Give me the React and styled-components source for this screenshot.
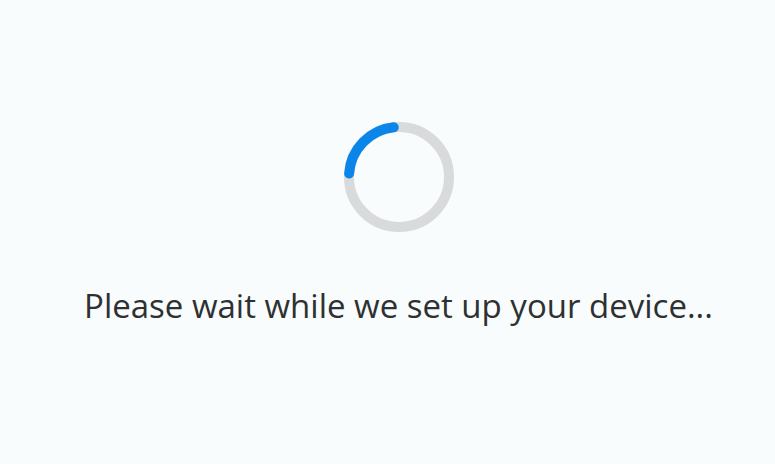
import React from "react";
import styled, { createGlobalStyle } from "styled-components";

const GlobalStyle = createGlobalStyle`
  html, body {
    margin: 0;
    padding: 0;
    background: #f8fcfc;
  }
`;

const Screen = styled.div`
  width: 775px;
  height: 464px;
  display: flex;
  flex-direction: column;
  align-items: center;
  padding-top: 121px;
  padding-left: 22px;
  box-sizing: border-box;
  background: #f8fcfc;
`;

const Spinner = styled.svg`
  width: 112px;
  height: 112px;
`;

const Message = styled.p`
  margin: 50px 0 0 0;
  font-family: "Open Sans", "Noto Sans", sans-serif;
  font-size: 33px;
  line-height: normal;
  color: #2e3031;
  white-space: nowrap;
`;

function LoadingRing() {
  const r = 50;
  const cx = 56;
  const cy = 56;
  const start = (184 * Math.PI) / 180;
  const end = (264 * Math.PI) / 180;
  const x1 = cx + r * Math.cos(start);
  const y1 = cy - r * Math.sin(start);
  const x2 = cx + r * Math.cos(end);
  const y2 = cy - r * Math.sin(end);
  return (
    <Spinner viewBox="0 0 112 112">
      <circle cx={cx} cy={cy} r={r} fill="none" stroke="#d8dadb" strokeWidth="10" />
      <path
        d={`M ${x1} ${y1} A ${r} ${r} 0 0 0 ${x2} ${y2}`}
        fill="none"
        stroke="#0a86ea"
        strokeWidth="10"
        strokeLinecap="round"
        transform={`scale(1,-1) translate(0,-112)`}
      />
    </Spinner>
  );
}

export default function App() {
  return (
    <>
      <GlobalStyle />
      <Screen>
        <LoadingRing />
        <Message>Please wait while we set up your device...</Message>
      </Screen>
    </>
  );
}
